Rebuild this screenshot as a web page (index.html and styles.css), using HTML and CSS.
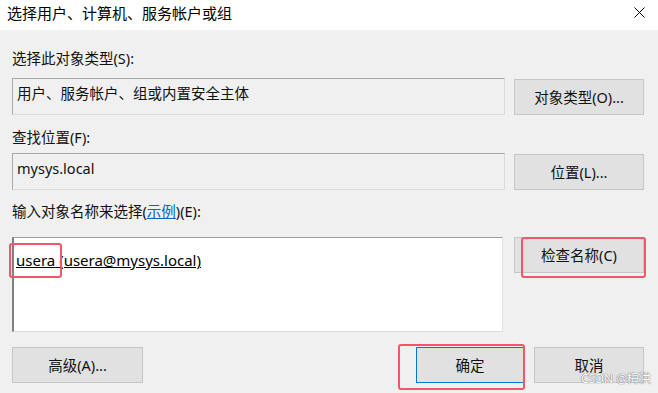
FILE: index.html
```html
<!DOCTYPE html>
<html lang="zh-CN">
<head>
  <meta charset="UTF-8" />
  <meta name="viewport" content="width=device-width, initial-scale=1.0"/>
  <title>选择用户、计算机、服务帐户或组</title>
  <link rel="stylesheet" href="styles.css">
</head>
<body>

  <div class="titlebar">
    <span class="title">选择用户、计算机、服务帐户或组</span>
    <span class="close">
      <svg width="11" height="11" viewBox="0 0 11 11"><path d="M0.5 0.5 L10.5 10.5 M10.5 0.5 L0.5 10.5" stroke="#000" stroke-width="1" fill="none"/></svg>
    </span>
  </div>

  <div class="content">
    <div class="label label-first">选择此对象类型(S):</div>
    <div class="row">
      <div class="field">用户、服务帐户、组或内置安全主体</div>
      <button class="btn btn-side">对象类型(O)...</button>
    </div>

    <div class="label label-second">查找位置(F):</div>
    <div class="row row-tight">
      <div class="field">mysys.local</div>
      <button class="btn btn-side">位置(L)...</button>
    </div>

    <div class="label label-third">输入对象名称来选择(<a class="link" href="#">示例</a>)(E):</div>
    <div class="row row-names">
      <div class="names">
        <span class="name"><span class="hl">usera<span class="mark mark-user"></span></span> (usera@mysys.local)</span>
      </div>
      <div class="wrap">
        <button class="btn btn-side">检查名称(C)</button>
        <span class="mark mark-check"></span>
      </div>
    </div>

    <div class="actions">
      <button class="btn btn-adv">高级(A)...</button>
      <div class="spacer"></div>
      <div class="wrap">
        <button class="btn btn-ok">确定</button>
        <span class="mark mark-ok"></span>
      </div>
      <button class="btn btn-cancel">取消</button>
    </div>
  </div>

  <div class="watermark">CSDN @梅洪</div>

</body>
</html>
```

FILE: styles.css
```css
* {
  margin: 0;
  padding: 0;
  box-sizing: border-box;
}
body {
  font-family: "Noto Sans", "Noto Sans CJK SC", sans-serif;
  font-size: 14.5px;
  color: #111;
  background: #f0f0f0;
  width: 658px;
  height: 393px;
  overflow: hidden;
  position: relative;
}
.titlebar {
  height: 30px;
  background: #fff;
  display: flex;
  align-items: flex-start;
  justify-content: space-between;
  padding: 3px 13px 0 7px;
}
.title {
  font-size: 15px;
  line-height: 20px;
  color: #000;
}
.close {
  display: block;
  margin-top: 4px;
  height: 11px;
}
.close svg {
  display: block;
}
.content {
  padding: 0 14px 0 12px;
}
.label {
  line-height: 20px;
  height: 20px;
  white-space: nowrap;
}
.label-first {
  margin-top: 18px;
}
.label-second {
  margin-top: 12px;
}
.label-third {
  margin-top: 11px;
}
.link {
  color: #0066cc;
  text-decoration: underline;
}
.row {
  display: flex;
  gap: 9px;
  margin-top: 10px;
  align-items: flex-start;
}
.row-tight {
  margin-top: 6px;
}
.row-names {
  margin-top: 16px;
}
.field {
  width: 493px;
  height: 37px;
  border: 1px solid;
  border-color: #a9a9a9 #dadada #dadada #a9a9a9;
  background: #f0f0f0;
  padding: 4px 4px 0 4px;
  line-height: 20px;
  white-space: nowrap;
}
.btn {
  font-family: "Noto Sans", "Noto Sans CJK SC", sans-serif;
  font-size: 14.5px;
  color: #111;
  background: #e1e1e1;
  border: 1px solid #c6c6c6;
  height: 36px;
  line-height: 20px;
  cursor: pointer;
}
.btn-side {
  width: 130px;
  margin-top: 1px;
}
.row-names .btn-side {
  margin-top: 0;
}
.names {
  width: 491px;
  height: 95px;
  margin-right: 2px;
  background: #fff;
  border-style: solid;
  border-width: 1px 1px 1px 2px;
  border-color: #a0a0a0 #e2e2e2 #dcdcdc #808080;
  padding: 12px 2px 0 2px;
  line-height: 20px;
  font-size: 15px;
}
.name {
  text-decoration: underline;
  color: #000;
}
.hl {
  position: relative;
}
.wrap {
  position: relative;
}
.mark {
  position: absolute;
  border: 2px solid #f35668;
  border-radius: 3px;
  pointer-events: none;
}
.mark-user {
  left: -7px;
  right: -7px;
  top: -7px;
  bottom: -8px;
}
.mark-check {
  left: 7px;
  right: -2px;
  top: 0;
  bottom: -5px;
}
.mark-ok {
  left: -18px;
  right: -1px;
  top: -3px;
  bottom: -7px;
}
.actions {
  display: flex;
  align-items: flex-start;
  margin-top: 15px;
}
.spacer {
  flex: 1;
}
.btn-adv {
  width: 131px;
}
.btn-ok {
  width: 108px;
  border-color: #0078d7;
  display: block;
}
.btn-cancel {
  width: 110px;
  margin-left: 10px;
}
.watermark {
  position: absolute;
  right: 7px;
  bottom: 9px;
  font-size: 12px;
  line-height: 10px;
  color: #fff;
  text-shadow: 0 0 1px #6e6e6e, 0 0 1px #6e6e6e;
}
```
